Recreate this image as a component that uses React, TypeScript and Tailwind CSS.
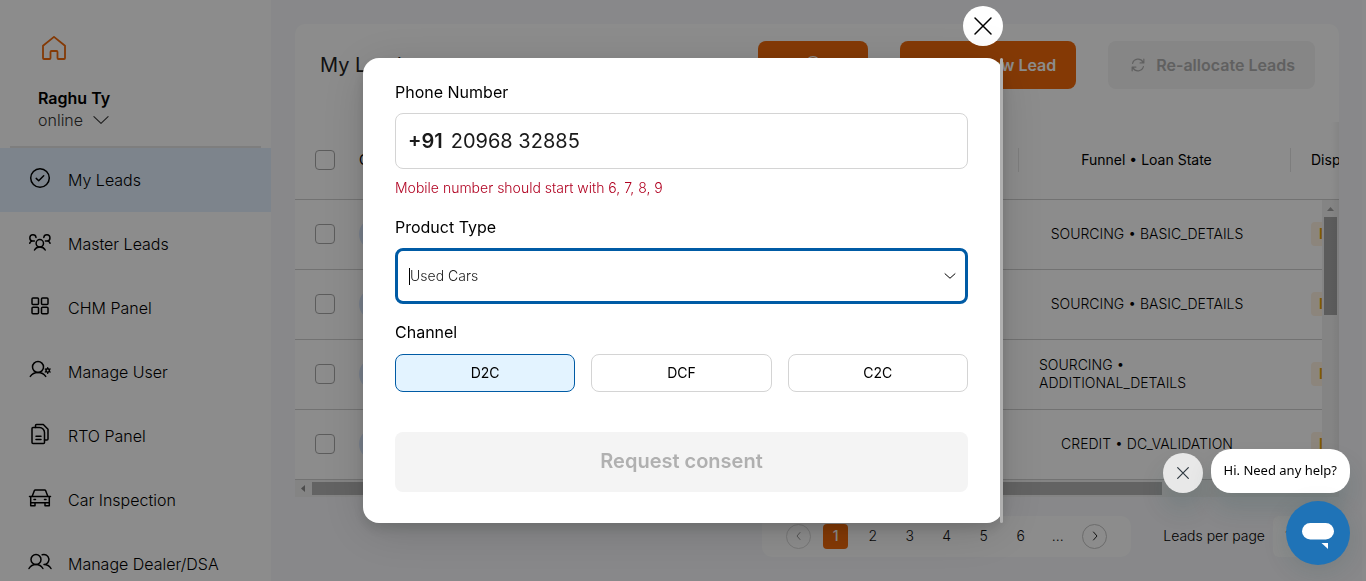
import type { ReactNode } from "react";

function Icon({ children, className = "size-6" }: { children: ReactNode; className?: string }) {
  return (
    <svg
      viewBox="0 0 24 24"
      fill="none"
      stroke="currentColor"
      strokeWidth="1.5"
      strokeLinecap="round"
      strokeLinejoin="round"
      aria-hidden="true"
      className={`shrink-0 ${className}`}
    >
      {children}
    </svg>
  );
}

const navItems: { label: string; active?: boolean; icon: ReactNode }[] = [
  {
    label: "My Leads",
    active: true,
    icon: (
      <>
        <circle cx="12" cy="12" r="9.3" />
        <path d="M8.2 12.4l2.5 2.4 5-5" />
      </>
    ),
  },
  {
    label: "Master Leads",
    icon: (
      <>
        <circle cx="11.8" cy="13.3" r="3.7" />
        <path d="M6.5 20c1-2 2.8-3 5.3-3s4.4 1 5.4 3" />
        <path d="M8 7.500A3.100 3.100 0 1 0 4.400 11C3 11.200 2 12 1.700 13.200M4.400 11h2" />
        <path d="M15.800 7.500a3.100 3.100 0 1 1 3.600 3.500c1.400.2 2.400 1 2.700 2.200M19.400 11h-2" />
      </>
    ),
  },
  {
    label: "CHM Panel",
    icon: (
      <>
        <rect x="4" y="4" width="6.5" height="6.5" rx="1" />
        <rect x="13.5" y="4" width="6.5" height="6.5" rx="1" />
        <rect x="4" y="13.3" width="6.5" height="6.5" rx="1" />
        <rect x="13.5" y="13.3" width="6.5" height="6.5" rx="1" />
      </>
    ),
  },
  {
    label: "Manage User",
    icon: (
      <>
        <circle cx="10" cy="9" r="5.5" />
        <path d="M2.300 18.400c1.700-2.600 4.300-3.900 7.700-3.900s6 1.300 7.700 3.900" />
        <circle cx="19.700" cy="12.500" r="1.700" />
        <path strokeWidth="1.300" d="M19.700 9.600v1M19.700 14.400v1M17.200 11l.9.500M21.300 13.500l.9.500M17.200 14l.9-.5M21.300 11.500l.9-.5" />
      </>
    ),
  },
  {
    label: "RTO Panel",
    icon: (
      <>
        <path d="M4 6.500a1 1 0 0 1 1-1h6.500a5 5 0 0 1 5 5v10a1 1 0 0 1-1 1H5a1 1 0 0 1-1-1z" />
        <path d="M7.500 5.500v-2a1 1 0 0 1 1-1h6.800L20 7.300V17a1 1 0 0 1-1 1h-2.500" />
        <path d="M8 14.200h5M8 17.500h5" />
      </>
    ),
  },
  {
    label: "Car Inspection",
    icon: (
      <>
        <path d="M4.200 10.300L6.400 4.600a1 1 0 0 1 .9-.6h9.400a1 1 0 0 1 .9.600l2.200 5.700" />
        <path d="M1.500 10.500h21M2.700 10.500v9.200h4.300v-3M21.300 10.500v9.200H17v-3M2.700 16.700h18.600M6 13.600h1.500M16.500 13.600H18" />
      </>
    ),
  },
  {
    label: "Manage Dealer/DSA",
    icon: (
      <>
        <circle cx="8" cy="9.500" r="5" />
        <path d="M1 18.500c1.500-2.600 3.900-4 7-4s5.400 1.400 6.900 4" />
        <path d="M14.200 4.800a5 5 0 1 1 1.800 9.700c3.100 0 5.500 1.400 7 4" />
      </>
    ),
  },
];

const rows = [
  "SOURCING • BASIC_DETAILS",
  "SOURCING • BASIC_DETAILS",
  "SOURCING • ADDITIONAL_DETAILS",
  "CREDIT • DC_VALIDATION",
];

const boxClass = "block size-5 appearance-none rounded-[4px] border border-[#a8a8a8] bg-white";

function Sidebar() {
  return (
    <aside className="w-[271px] shrink-0 bg-white">
      <a href="#home" aria-label="Home" className="ml-[42px] mt-9 block size-6 text-[#f0690a]">
        <Icon>
          <path strokeWidth="1.8" d="M1 9.800L12 .9l11 8.900v12.200a1 1 0 0 1-1 1h-5.500a1 1 0 0 1-1-1v-6a1 1 0 0 0-1-1h-5a1 1 0 0 0-1 1v6a1 1 0 0 1-1 1H2a1 1 0 0 1-1-1z" />
        </Icon>
      </a>
      <div className="ml-[38px] mt-[27px] text-base leading-[22px]">
        <p className="font-semibold text-black">Raghu Ty</p>
        <button type="button" className="flex items-center gap-2 font-light text-[#333]">
          online
          <Icon className="size-5">
            <path strokeWidth="1.3" d="M3.500 8l8.500 8 8.500-8" />
          </Icon>
        </button>
      </div>
      <div className="mx-[10px] mt-[15px] h-[2px] bg-[#e6e6e6]" />
      <nav>
        {navItems.map((item) => (
          <a
            key={item.label}
            href="#leads"
            className={`flex h-16 items-center gap-4 pl-7 text-base font-light text-black ${
              item.active ? "bg-[#e3f1ff]" : ""
            }`}
          >
            <span className="pb-1">
              <Icon>{item.icon}</Icon>
            </span>
            {item.label}
          </a>
        ))}
      </nav>
    </aside>
  );
}

function LeadsTable() {
  return (
    <div className="relative overflow-hidden">
      <table className="w-[1144px] table-fixed border-collapse text-sm">
        <colgroup>
          <col className="w-[60px]" />
          <col className="w-[663px]" />
          <col className="w-[273px]" />
          <col />
        </colgroup>
        <thead>
          <tr className="h-[77px] border-b border-[#cfcfcf]">
            <th className="pl-5">
              <input type="checkbox" aria-label="Select all leads" className={boxClass} />
            </th>
            <th className="pl-1 text-left font-normal">Customer</th>
            <th className="font-normal">
              <div className="border-x border-[#e4e4e4] py-[2px] pl-5 pr-9 leading-5">Funnel • Loan State</div>
            </th>
            <th className="pl-5 text-left font-normal">Disposition</th>
          </tr>
        </thead>
        <tbody>
          {rows.map((state, i) => (
            <tr key={i} className="h-[70px] border-b border-[#cfcfcf]">
              <td className="pl-5">
                <input type="checkbox" aria-label={`Select lead ${i + 1}`} className={boxClass} />
              </td>
              <td className="pl-1">
                <div className="size-8 rounded-full bg-[#dceaff]" />
              </td>
              <td className="pl-[21px] pr-9 font-light leading-[18px]">
                <div className="mx-auto w-fit">{state}</div>
              </td>
              <td className="pl-5">
                <span className="inline-block rounded-[4px] bg-[#fff2e2] px-2 text-sm font-semibold leading-6 text-[#e0a000]">
                  Interested
                </span>
              </td>
            </tr>
          ))}
        </tbody>
      </table>
      <div className="absolute bottom-0 right-0 top-[78px] flex w-[17px] flex-col items-center bg-[#f1f1f1]">
        <svg viewBox="0 0 17 17" className="size-[17px]" aria-hidden="true">
          <path d="M5 11l3.500-4 3.500 4z" fill="#a3a3a3" />
        </svg>
        <div className="h-[98px] w-[13px] bg-[#a8a8a8]" />
      </div>
      <div className="pointer-events-none absolute inset-y-0 right-0 w-2 bg-linear-to-r from-transparent to-black/5" />
    </div>
  );
}

function Pager() {
  return (
    <div className="mt-[19px] flex items-center justify-end text-sm font-light">
      <nav aria-label="Pages" className="flex h-[41px] items-center gap-3 rounded-[10px] bg-white px-6">
        <button type="button" aria-label="Previous page" className="grid size-[25px] place-items-center rounded-full border border-[#d9d9d9] text-[#999]">
          <Icon className="size-3">
            <path strokeWidth="2" d="M14 5l-6 7 6 7" />
          </Icon>
        </button>
        <button type="button" className="size-[25px] rounded-[4px] bg-[#f0690a] font-medium text-white">1</button>
        {["2", "3", "4", "5", "6", "..."].map((p) => (
          <button key={p} type="button" className="size-[25px] text-[#111]">{p}</button>
        ))}
        <button type="button" aria-label="Next page" className="grid size-[25px] place-items-center rounded-full border border-[#c4c4c4] text-[#222]">
          <Icon className="size-3">
            <path strokeWidth="2" d="M9 4l7 8-7 8" />
          </Icon>
        </button>
      </nav>
      <label htmlFor="per-page" className="ml-8">Leads per page</label>
      <select id="per-page" className="ml-2 h-[41px] w-[66px] appearance-none rounded-md bg-white px-3">
        <option>10</option>
      </select>
    </div>
  );
}

function LeadDialog() {
  return (
    <div className="flex w-full max-w-[640px] flex-col gap-3">
      <button type="button" aria-label="Close" className="grid size-10 place-items-center self-end rounded-full bg-white pb-px text-black">
        <Icon className="size-6">
          <path d="M4 4l16 16M20 4L4 20" />
        </Icon>
      </button>
      <form
        role="dialog"
        aria-label="New lead"
        className="relative rounded-2xl bg-white pb-[31px] pl-8 pr-[35px] pt-[22px] text-base leading-6 text-black shadow-[0_6px_12px_rgba(0,0,0,0.12),0_8px_48px_rgba(0,0,0,0.15)]"
      >
        <label htmlFor="phone" className="block">Phone Number</label>
        <div className="mt-[9px] flex h-14 items-center gap-2 rounded-lg border border-[#d4d4d4] px-3 text-xl text-[#1a1a1a]">
          <span className="font-semibold">+91</span>
          <input id="phone" type="tel" defaultValue="20968 32885" className="min-w-0 flex-1 outline-none" />
        </div>
        <p className="mt-[9px] text-sm font-light leading-5 text-[#b00020]">Mobile number should start with 6, 7, 8, 9</p>

        <label htmlFor="product" className="mt-[17px] block">Product Type</label>
        <div className="relative mt-[9px]">
          <select
            id="product"
            className="block h-14 w-full appearance-none rounded-lg border-3 border-[#005ba5] bg-white pl-3 text-sm font-light text-[#222] outline-none"
          >
            <option>Used Cars</option>
          </select>
          <span className="pointer-events-none absolute left-[14px] top-5 h-[17px] w-px bg-black" />
          <span className="pointer-events-none absolute inset-y-0 right-3 flex items-center">
            <Icon className="size-3">
              <path strokeWidth="2" d="M2 7.500l10 9 10-9" />
            </Icon>
          </span>
        </div>

        <fieldset className="mt-4">
          <legend>Channel</legend>
          <div className="mt-[10px] grid grid-cols-3 gap-4 text-sm">
            <button type="button" aria-pressed="true" className="h-[38px] rounded-lg border border-[#005ba5] bg-[#e3f3ff]">D2C</button>
            <button type="button" className="h-[38px] rounded-lg border border-[#d4d4d4]">DCF</button>
            <button type="button" className="h-[38px] rounded-lg border border-[#d4d4d4]">C2C</button>
          </div>
        </fieldset>

        <button type="submit" disabled className="mt-10 block h-[60px] w-full rounded-lg bg-[#f4f4f4] pb-[2px] text-xl font-semibold text-[#b0b0b0]">
          Request consent
        </button>
        <span className="pointer-events-none absolute inset-y-0 right-0 w-[3px] rounded-sm bg-[#b0b0b0]" />
      </form>
    </div>
  );
}

function ChatWidget() {
  return (
    <div className="fixed bottom-4 right-4 flex flex-col items-end gap-2">
      <div className="flex items-end gap-2">
        <button type="button" aria-label="Dismiss message" className="grid size-10 place-items-center rounded-full bg-[#e8e8e8] text-[#2f3941] shadow-[0_16px_24px_rgba(23,73,77,0.15)]">
          <Icon className="size-4">
            <path strokeWidth="1.800" d="M4 4l16 16M20 4L4 20" />
          </Icon>
        </button>
        <button type="button" className="h-11 rounded-[20px] bg-white px-[13px] font-['Noto_Sans',sans-serif] text-[13px] text-black shadow-[0_16px_24px_rgba(23,73,77,0.15)]">
          Hi. Need any help?
        </button>
      </div>
      <button type="button" aria-label="Open chat" className="grid size-16 place-items-center rounded-full bg-[#1f73b7] shadow-[0_6px_24px_rgba(23,73,77,0.15)]">
        <svg viewBox="0 0 32 32" className="size-8" fill="white" aria-hidden="true">
          <rect y="6" width="32" height="16.500" rx="8.250" />
          <path d="M19.500 26H26v6z" />
        </svg>
      </button>
    </div>
  );
}

export default function App() {
  return (
    <div className="flex h-screen overflow-hidden bg-[#f7f8fb] font-['Inter',sans-serif] text-black">
      <Sidebar />
      <main className="min-w-0 flex-1 pl-6 pr-[23px] pt-6">
        <section className="overflow-hidden rounded-t-[10px] bg-white">
          <header className="flex h-[98px] items-start gap-8 pl-[25px] pr-6 pt-[17px]">
            <h1 className="mr-auto text-xl leading-[48px] text-[#222]">My Leads</h1>
            <button type="button" aria-label="Search" className="grid h-12 w-[110px] place-items-center rounded-lg bg-[#f0690a] text-white">
              <Icon className="size-5">
                <circle cx="12" cy="10.500" r="8.500" />
                <path d="M18 17l4 4" />
              </Icon>
            </button>
            <button type="button" className="h-12 w-44 rounded-lg bg-[#f0690a] pr-5 text-right text-base font-semibold text-white">
              Add New Lead
            </button>
            <button type="button" disabled className="flex h-12 items-center gap-2 rounded-lg bg-[#f4f4f4] px-5 text-base font-semibold text-[#b0b0b0]">
              <Icon className="size-5">
                <path d="M5.500 10a6.800 6.800 0 0 1 12.500-1.500M19 5v4.500h-4.500M18.500 14a6.800 6.800 0 0 1-12.500 1.500M5 19v-4.500h4.500" />
              </Icon>
              Re-allocate Leads
            </button>
          </header>
          <LeadsTable />
          <div className="flex h-[17px] items-center bg-[#f1f1f1]">
            <svg viewBox="0 0 17 17" className="size-[17px]" aria-hidden="true">
              <path d="M10 5L6 8.500l4 3.500z" fill="#8a8a8a" />
            </svg>
            <div className="h-[13px] w-[850px] bg-[#b4b4b4]" />
          </div>
        </section>
        <Pager />
      </main>
      <div className="w-1 shrink-0 bg-[#fcfcfd]" />
      <div className="fixed inset-0 flex items-start justify-center bg-black/45 pt-[6px]">
        <LeadDialog />
      </div>
      <ChatWidget />
    </div>
  );
}
